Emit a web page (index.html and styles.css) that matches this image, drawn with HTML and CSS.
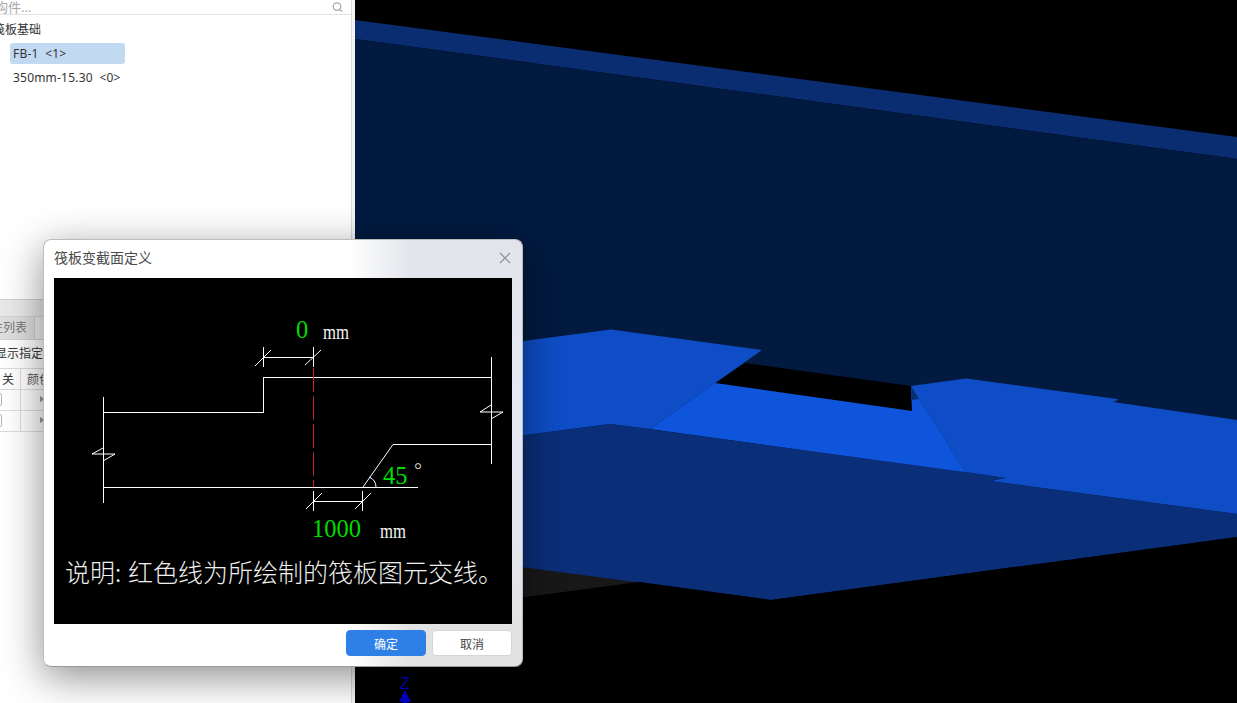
FILE: index.html
```html
<!DOCTYPE html>
<html lang="zh-CN">
<head>
<meta charset="utf-8">
<title>筏板变截面定义</title>
<link rel="stylesheet" href="styles.css">
</head>
<body>
<div class="app">
  <aside class="side">
    <div class="side-inner">
      <div class="search">
        <span class="search-text">构件...</span>
        <svg class="search-icon" viewBox="0 0 11 11"><circle cx="5" cy="4.6" r="3.8"/><path d="M7.8 7.4 10 9.6"/></svg>
      </div>
      <div class="tree">
        <div class="tree-root">筏板基础</div>
        <div class="tree-item selected">FB-1 &nbsp;&lt;1&gt;</div>
        <div class="tree-item">350mm-15.30 &nbsp;&lt;0&gt;</div>
      </div>
      <div class="lower">
        <div class="lower-band"></div>
        <div class="tabs">
          <div class="tab active"><span class="tab-text">性列表</span></div>
          <div class="tab"></div>
        </div>
        <div class="filter">显示指定图层</div>
        <div class="table">
          <div class="row head"><div class="cell c1">关</div><div class="cell c2">颜色</div></div>
          <div class="row"><div class="cell c1"><span class="check"></span></div><div class="cell c2"><span class="arrow"></span></div></div>
          <div class="row"><div class="cell c1"><span class="check"></span></div><div class="cell c2"><span class="arrow"></span></div></div>
        </div>
      </div>
    </div>
  </aside>

  <svg class="scene" viewBox="355 0 882 703">
    <polygon class="f-band" points="355,20 1237,137 1237,159 355,39"/>
    <polygon class="f-wall" points="355,39 1237,159 1237,560 355,560"/>
    <polygon class="f-black" points="745,363 911,386 912,411 715,383"/>
    <polygon class="f-floor" points="715,383 912,411 911,386 966,473 650,429"/>
    <polygon class="f-band" points="911,386 919,399 912,400"/>
    <polygon class="f-slope" points="355,363 611,329.5 762,350 650,429 610,424 355,457"/>
    <polygon class="f-slope" points="911,386 966,378.5 1117,399 1118,400 1113,402 1237,420 1237,514 990,481 1005,478 965,472"/>
    <polygon class="f-gray" points="355,545 640,582 355,620"/>
    <polygon class="f-face" points="355,457 610,424 965,472 1005,478 990,481 1237,514 1237,537 771,600 355,545"/>
    <polygon class="f-black" points="355,620 640,582 771,600 1237,537 1237,703 355,703"/>
    <text class="axis-label" x="405" y="689">Z</text>
    <polygon class="axis" points="405,690 411,702 407,702 407,703 403,703 403,702 399,702"/>
  </svg>

  <section class="dialog">
    <header class="dialog-head">
      <h1 class="dialog-title">筏板变截面定义</h1>
      <svg class="close" viewBox="0 0 12 12"><path d="M1 1 11 11M11 1 1 11"/></svg>
    </header>
    <svg class="drawing" viewBox="54 278 458 346">
      <g class="thin">
        <path d="M103.5 397V503M103.5 412.5H263.5V377.5H491.5M491.5 357V464M393 444.5H491.5M103.5 487.5H418"/>
        <path d="M263.5 347V367M263.5 357.5H313.5M313.5 347V367"/>
        <path d="M313.5 491V511M362.5 491V511M313.5 501.5H362.5"/>
      </g>
      <g class="soft">
        <path d="M393 444.5 363 487"/>
        <path d="M255 366 271 350M305 365 321 350M306 509 322 493M355 509 371 493"/>
        <path d="M92 454H115M92 454 103 448M115 454 103 461"/>
        <path d="M480 412H503M480 412 491 405M503 412 491 419"/>
        <path d="M369 477Q376 480 376 487"/>
      </g>
      <path class="dash" d="M313.5 368V487"/>
      <text class="num" x="296" y="338">0</text>
      <text class="unit" x="323" y="339" textLength="26" lengthAdjust="spacingAndGlyphs">mm</text>
      <text class="num" x="383" y="484">45</text>
      <text class="deg" x="414" y="477">°</text>
      <text class="num" x="312" y="537">1000</text>
      <text class="unit" x="380" y="538" textLength="26" lengthAdjust="spacingAndGlyphs">mm</text>
      <text class="note" x="65" y="582">说明:<tspan x="128">红色线为所绘制的筏板图元交线。</tspan></text>
    </svg>
    <footer class="dialog-foot">
      <button class="btn primary">确定</button>
      <button class="btn">取消</button>
    </footer>
  </section>
</div>
</body>
</html>
```
FILE: styles.css
```css
* { box-sizing: border-box; }
html, body { margin: 0; height: 100%; overflow: hidden; background: #000; }
body { font-family: "Noto Sans", "Noto Sans CJK SC", sans-serif; font-size: 12px; color: #333; }

.app { position: relative; display: flex; width: 1237px; height: 703px; overflow: hidden; }

/* left panel */
.side { flex: 0 0 355px; background: #f4f4f4; padding-right: 3px; overflow: hidden; }
.side-inner { display: flex; flex-direction: column; height: 100%; background: #fff; border-right: 1px solid #d9d9d9; }

.search { flex: 0 0 15px; display: flex; justify-content: space-between; align-items: center; border-bottom: 1px solid #e2e2e2; padding-right: 8px; line-height: 12px; }
.search-text { margin-left: -5px; color: #a8a8a8; font-size: 13px; }
.search-icon { width: 11px; height: 11px; fill: none; stroke: #a8a8a8; stroke-width: 1.3; }

.tree { flex: 0 0 284px; padding-left: 10px; }
.tree-root { margin: 6px 0 4px -17px; height: 18px; line-height: 18px; }
.tree-item { width: 115px; height: 21px; line-height: 21px; padding-left: 3px; margin-bottom: 3px; white-space: nowrap; font-size: 12px; letter-spacing: .2px; }
.tree-item.selected { background: #c2d9f2; border-radius: 3px; }

.lower { flex: 1; display: flex; flex-direction: column; }
.lower-band { flex: 0 0 18px; background: #e9e9e9; border-top: 1px solid #cfcfcf; border-bottom: 1px solid #d4d4d4; }
.tabs { flex: 0 0 22px; display: flex; background: #f2f2f2; border-bottom: 1px solid #d4d4d4; }
.tab { width: 60px; border-right: 1px solid #cfcfcf; background: #efefef; }
.tab.active { width: 35px; background: #dedede; overflow: hidden; white-space: nowrap; line-height: 22px; }
.tab-text { display: block; margin-left: -9px; color: #777; }
.filter { flex: 0 0 26px; line-height: 28px; margin-left: -5px; white-space: nowrap; }

.table { display: flex; flex-direction: column; }
.row { display: flex; height: 21px; border-bottom: 1px solid #dcdcdc; }
.row.head { height: 22px; border-top: 1px solid #dcdcdc; }
.cell { display: flex; align-items: center; }
.c1 { width: 21px; border-right: 1px solid #dcdcdc; justify-content: center; position: relative; padding-right: 4px; }
.c2 { width: 60px; padding-left: 6px; white-space: nowrap; color: #555; }
.check { position: absolute; left: -11px; top: 3px; width: 13px; height: 13px; border: 1px solid #b5b5b5; border-radius: 2px; }
.arrow { margin-left: 13px; margin-top: -2px; width: 0; height: 0; border-left: 5px solid #999; border-top: 3px solid transparent; border-bottom: 3px solid transparent; }

/* 3D scene */
.scene { flex: 1; display: block; height: 703px; }
.f-band { fill: #0a2c70; }
.f-wall { fill: #021a40; }
.f-black { fill: #000; }
.f-floor { fill: #0f55dc; }
.f-slope { fill: #0e4dc6; }
.f-face { fill: #0a2e78; }
.f-gray { fill: #181818; }
.axis { fill: #0000cc; }
.axis-label { fill: #0000cc; font: 16px "Liberation Sans", sans-serif; text-anchor: middle; }

/* dialog */
.dialog {
  position: absolute; left: 43px; top: 239px; width: 480px; height: 428px;
  display: flex; flex-direction: column;
  border: 1px solid #bcbcbc; border-bottom-color: #9a9a9a; border-radius: 8px; padding: 0 10px 0 10px;
  background:
    linear-gradient(90deg, #fff 304px, rgba(255,255,255,0) 368px),
    linear-gradient(180deg, #e2e4ea 0, #e5e9f5 35%, #e3e6ee 70%, #e2e2e2 90%);
  box-shadow: 0 10px 40px rgba(0,0,0,.45);
}
.dialog-head { flex: 0 0 38px; display: flex; align-items: center; justify-content: space-between; padding-bottom: 2px; }
.dialog-title { margin: 0; font-size: 14px; font-weight: 400; color: #4a4a4a; line-height: 20px; }
.close { width: 12px; height: 12px; margin-right: 1px; fill: none; stroke: #8d8f94; stroke-width: 1.2; }
.drawing { display: block; flex: 0 0 346px; width: 458px; height: 346px; background: #000; }
.thin path { fill: none; stroke: #fff; stroke-width: 1; shape-rendering: crispEdges; }
.soft path { fill: none; stroke: #fff; stroke-width: 1; }
.dash { fill: none; stroke: #c8202c; stroke-width: 1; stroke-dasharray: 24 4; shape-rendering: crispEdges; }
.num { fill: #00dc00; font: 24.5px "Liberation Serif", serif; }
.unit { fill: #f4f4f4; font: 20px "Liberation Serif", serif; }
.deg { fill: #c4c4c4; font: 20px "Liberation Serif", serif; }
.note { fill: #f0f0f0; font: 300 25px "Noto Sans CJK SC", "Liberation Serif", serif; }
.dialog-foot { flex: 1; display: flex; justify-content: flex-end; gap: 6px; padding-top: 6px; padding-bottom: 11px; }
.btn { width: 80px; height: 26px; border: 1px solid #d6d6d6; border-radius: 4px; background: #fff; color: #444; font: 12px "Noto Sans CJK SC", sans-serif; padding: 0; }
.btn.primary { background: #2e80e6; border-color: #2e80e6; color: #fff; }
```
